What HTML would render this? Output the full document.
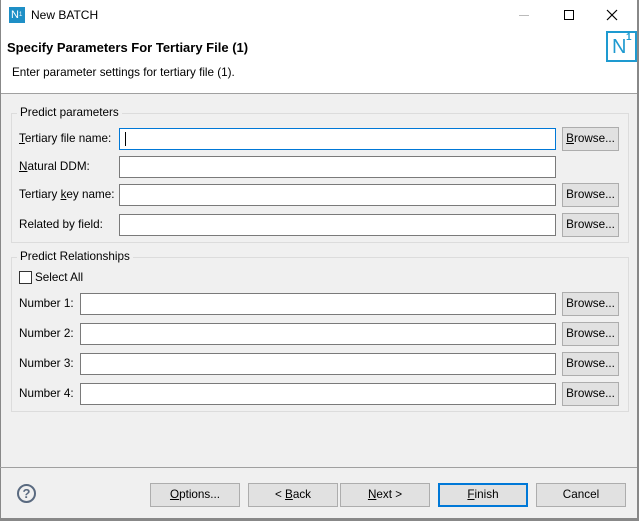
<!DOCTYPE html>
<html><head><style>
*{box-sizing:border-box}
body{margin:0;width:639px;height:521px;background:#f0f0f0;font-family:"Liberation Sans",sans-serif;font-size:11.7px;color:#000;position:relative;overflow:hidden}
.a{position:absolute}
.inp{position:absolute;height:22px;background:#fff;border:1px solid #7a7a7a}
.btn{position:absolute;height:24px;background:#e1e1e1;border:1px solid #adadad;text-align:center;line-height:22px}
.grp{position:absolute;border:1px solid #dcdcdc}
.lg{position:absolute;background:#f0f0f0;padding:0 3px}
u{text-decoration:underline}
</style></head><body>
<div class="a" style="left:0;top:0;width:639px;height:94px;background:#fff;border-bottom:1px solid #a0a0a0"></div>
<div class="a" style="left:0;top:0;width:1px;height:521px;background:#888"></div>
<div class="a" style="left:637px;top:0;width:2px;height:521px;background:#888"></div>
<div class="a" style="left:0;top:518px;width:639px;height:3px;background:#888"></div>
<div class="a" style="left:9px;top:7px;width:16px;height:16px;background:#1e8fc6;color:#fff;font-size:11px;line-height:16px;padding-left:2px">N<span style="font-size:6px;vertical-align:top">1</span></div>
<div class="a" style="left:31px;top:8px;font-size:12px">New BATCH</div>
<div class="a" style="left:519px;top:15px;width:10px;height:1px;background:#bbb"></div>
<div class="a" style="left:564px;top:10px;width:10px;height:10px;border:1px solid #000"></div>
<svg class="a" style="left:606px;top:9px" width="12" height="12"><path d="M1 1L11 11M11 1L1 11" stroke="#000" stroke-width="1.2"/></svg>
<div class="a" style="left:7px;top:40px;font-weight:bold;font-size:13px">Specify Parameters For Tertiary File (1)</div>
<div class="a" style="left:12px;top:66px">Enter parameter settings for tertiary file (1).</div>
<div class="a" style="left:606px;top:31px;width:31px;height:31px;border:2px solid #1e9ad0"></div>
<div class="a" style="left:612px;top:36px;color:#1e9ad0;font-size:20px;line-height:22px">N</div>
<div class="a" style="left:626px;top:32px;color:#1e9ad0;font-size:10px;font-weight:bold">1</div>

<div class="grp" style="left:11px;top:113px;width:618px;height:130px"></div>
<div class="lg" style="left:17px;top:106px">Predict parameters</div>
<div class="a" style="left:19px;top:132px"><u>T</u>ertiary file name:</div>
<div class="inp" style="left:119px;top:128px;width:437px;border-color:#0078d7"><div class="a" style="left:5px;top:3px;width:1px;height:14px;background:#000"></div></div>
<div class="btn" style="left:562px;top:127px;width:57px"><u>B</u>rowse...</div>
<div class="a" style="left:19px;top:160px"><u>N</u>atural DDM:</div>
<div class="inp" style="left:119px;top:156px;width:437px"></div>
<div class="a" style="left:19px;top:188px">Tertiary <u>k</u>ey name:</div>
<div class="inp" style="left:119px;top:184px;width:437px"></div>
<div class="btn" style="left:562px;top:183px;width:57px">Browse...</div>
<div class="a" style="left:19px;top:218px">Related by field:</div>
<div class="inp" style="left:119px;top:214px;width:437px"></div>
<div class="btn" style="left:562px;top:213px;width:57px">Browse...</div>

<div class="grp" style="left:11px;top:257px;width:618px;height:155px"></div>
<div class="lg" style="left:17px;top:250px">Predict Relationships</div>
<div class="a" style="left:19px;top:271px;width:13px;height:13px;background:#fff;border:1px solid #333"></div>
<div class="a" style="left:35px;top:271px">Select All</div>
<div class="a" style="left:19px;top:297px">Number 1:</div>
<div class="inp" style="left:80px;top:293px;width:476px"></div>
<div class="btn" style="left:562px;top:292px;width:57px">Browse...</div>
<div class="a" style="left:19px;top:327px">Number 2:</div>
<div class="inp" style="left:80px;top:323px;width:476px"></div>
<div class="btn" style="left:562px;top:322px;width:57px">Browse...</div>
<div class="a" style="left:19px;top:357px">Number 3:</div>
<div class="inp" style="left:80px;top:353px;width:476px"></div>
<div class="btn" style="left:562px;top:352px;width:57px">Browse...</div>
<div class="a" style="left:19px;top:387px">Number 4:</div>
<div class="inp" style="left:80px;top:383px;width:476px"></div>
<div class="btn" style="left:562px;top:382px;width:57px">Browse...</div>

<div class="a" style="left:0;top:467px;width:637px;height:1px;background:#a0a0a0"></div>
<div class="a" style="left:17px;top:484px;width:19px;height:19px;border:2px solid #5a6a80;border-radius:50%;color:#5a6a80;font-weight:bold;font-size:13px;text-align:center;line-height:15px">?</div>
<div class="btn" style="left:150px;top:483px;width:90px"><u>O</u>ptions...</div>
<div class="btn" style="left:248px;top:483px;width:90px">&lt; <u>B</u>ack</div>
<div class="btn" style="left:340px;top:483px;width:90px"><u>N</u>ext &gt;</div>
<div class="btn" style="left:438px;top:483px;width:90px;border:2px solid #0078d7;line-height:20px"><u>F</u>inish</div>
<div class="btn" style="left:536px;top:483px;width:90px">Cancel</div>
</body></html>
